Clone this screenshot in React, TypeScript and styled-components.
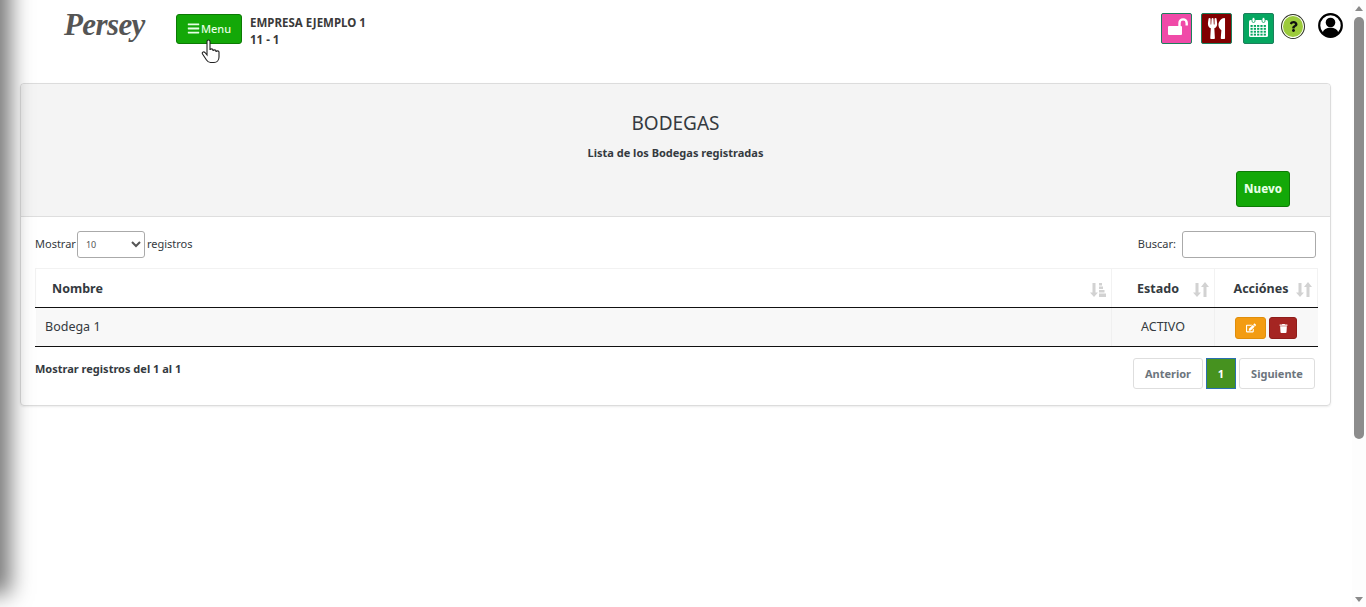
import styled, { createGlobalStyle } from 'styled-components';
import { ReactElement, ReactNode } from 'react';
import { FaBars, FaEdit, FaQuestion, FaTrash, FaUtensils } from 'react-icons/fa';

const GlobalStyle = createGlobalStyle`
  html, body {
    margin: 0;
    height: 100%;
    overflow: hidden;
    background: #fff;
  }
  body {
    font-family: "Noto Sans", "Liberation Sans", sans-serif;
    font-size: 12px;
    color: #343a40;
  }
`;

const Page = styled.div`
  position: relative;
  display: flex;
  height: 607px;
  overflow: hidden;
`;

const Main = styled.main`
  flex: 1;
  min-width: 0;
`;

const SideShadow = styled.div`
  position: absolute;
  left: -12px;
  top: -20px;
  width: 12px;
  height: 604px;
  box-shadow: 0 0 22px 10px rgba(0, 0, 0, 0.55);
`;

const Header = styled.header`
  display: flex;
  align-items: flex-start;
  height: 83px;
  padding-right: 9px;
`;

const Logo = styled.div`
  box-sizing: border-box;
  width: 176px;
  padding: 0 0 0 64px;
  font-family: "Liberation Serif", serif;
  font-style: italic;
  font-weight: 700;
  font-size: 31px;
  line-height: 50px;
  letter-spacing: -0.6px;
  color: #555;
`;

const MenuButton = styled.button`
  position: relative;
  display: flex;
  align-items: center;
  justify-content: center;
  gap: 1px;
  width: 66px;
  height: 30px;
  margin: 14px 8px 0 0;
  padding: 0 0 1px;
  border: 1px solid #0c7a05;
  border-radius: 3px;
  background: #13a808;
  color: #e6ffe6;
  font: 500 11px "Noto Sans", sans-serif;
`;

const Cursor = styled.svg`
  position: absolute;
  left: 24px;
  top: 24px;
`;

const Company = styled.div`
  flex: 1;
  margin-top: 14px;
  font-size: 11.5px;
  font-weight: 700;
  line-height: 17px;
  color: #3a3a3a;
`;

const Tools = styled.div`
  display: flex;
  align-items: flex-start;
  margin-top: 13px;
`;

const ToolTile = styled.div<{ $bg: string; $gap: number }>`
  display: flex;
  align-items: center;
  justify-content: center;
  box-sizing: border-box;
  width: 31px;
  height: 31px;
  margin-right: ${p => p.$gap}px;
  border: 1px solid #1d7f5c;
  border-radius: 2px;
  background: ${p => p.$bg};
  color: #fff;
`;

const HelpBadge = styled.div`
  display: flex;
  align-items: center;
  justify-content: center;
  box-sizing: border-box;
  width: 24px;
  height: 25px;
  margin: 1px 13px 0 0;
  border: 1px solid #333;
  border-radius: 50%;
  background: #9ccb3b;
  box-shadow: inset 0 0 0 1px #fff;
  color: #111;
`;

const Card = styled.section`
  margin: 0 21px 0 20px;
  border: 1px solid #dcdcdc;
  border-radius: 4px;
  box-shadow: 0 1px 2px rgba(0, 0, 0, 0.08);
`;

const CardHeader = styled.div`
  display: flex;
  flex-direction: column;
  height: 133px;
  box-sizing: border-box;
  padding: 25px 40px 0;
  border-bottom: 1px solid #dedede;
  border-radius: 4px 4px 0 0;
  background: #f4f4f4;
  text-align: center;
`;

const Title = styled.h1`
  margin: 0;
  font-size: 19px;
  font-weight: 400;
  line-height: 28px;
  color: #343a40;
`;

const Subtitle = styled.p`
  margin: 8px 0 0;
  font-size: 11px;
  font-weight: 700;
  line-height: 16px;
`;

const PrimaryButton = styled.button`
  align-self: flex-end;
  width: 54px;
  height: 36px;
  margin-top: 10px;
  padding: 0 0 1px;
  border: 1px solid #0c7a05;
  border-radius: 3px;
  background: #13a808;
  color: #e6ffe6;
  font: 800 11.5px "Noto Sans", sans-serif;
`;

const CardBody = styled.div`
  padding: 14px 14px 16px;
`;

const Controls = styled.div`
  display: flex;
  align-items: center;
  justify-content: space-between;
  height: 27px;
  margin-bottom: 10px;
`;

const ControlLabel = styled.label`
  display: flex;
  align-items: flex-start;
  gap: 2px;
  font-size: 11px;
  line-height: 25px;
`;

const LengthSelect = styled.select`
  width: 68px;
  height: 27px;
  margin-left: -1px;
  padding: 0 0 0 4px;
  border: 1px solid #aaa;
  border-radius: 3px;
  background: #fff;
  color: #555;
  font: 9px "Noto Sans", sans-serif;
`;

const SearchInput = styled.input`
  width: 134px;
  height: 27px;
  box-sizing: border-box;
  margin-left: 4px;
  border: 1px solid #aaa;
  border-radius: 3px;
`;

const Table = styled.table`
  width: 1283px;
  border-collapse: collapse;
  table-layout: fixed;
`;

const HeadCell = styled.th<{ $center?: boolean; $width?: number }>`
  position: relative;
  box-sizing: border-box;
  width: ${p => (p.$width ? `${p.$width}px` : 'auto')};
  height: 39px;
  padding: 0 16px 0 ${p => (p.$center ? 6 : 16)}px;
  border: 1px solid #f2f2f2;
  border-bottom: 1px solid #111;
  font-size: 12.5px;
  font-weight: 700;
  text-align: ${p => (p.$center ? 'center' : 'left')};
  color: #343a40;
`;

const SortMark = styled.svg`
  position: absolute;
  right: 5px;
  top: 13px;
  color: #d2d2d2;
`;

const Row = styled.tr`
  background: #f8f8f8;
`;

const Cell = styled.td<{ $center?: boolean }>`
  height: 36px;
  padding: 0 ${p => (p.$center ? 10 : 9)}px 2px;
  border-left: 1px solid ${p => (p.$center ? '#f0f0f0' : 'transparent')};
  border-bottom: 1px solid #111;
  font-size: 12.5px;
  line-height: 17px;
  text-align: ${p => (p.$center ? 'center' : 'left')};
`;

const Actions = styled.div`
  display: flex;
  justify-content: center;
  gap: 3px;
  margin-top: 4px;
`;

const ActionButton = styled.button<{ $bg: string; $line: string; $width: number }>`
  display: flex;
  align-items: center;
  justify-content: center;
  width: ${p => p.$width}px;
  height: 22px;
  padding: 0;
  border: 1px solid ${p => p.$line};
  border-radius: 3px;
  background: ${p => p.$bg};
  color: #fff;
`;

const Footer = styled.div`
  display: flex;
  align-items: flex-start;
  justify-content: space-between;
  margin-top: 11px;
  padding-right: 1px;
`;

const Info = styled.div`
  margin-top: 3px;
  font-size: 11px;
  font-weight: 700;
`;

const Pager = styled.div`
  display: flex;
  gap: 3px;
`;

const PageButton = styled.button<{ $active?: boolean; $width: number }>`
  width: ${p => p.$width}px;
  height: 31px;
  padding: 0;
  border: 1px solid ${p => (p.$active ? '#2a6fb0' : '#dedede')};
  border-radius: ${p => (p.$active ? 0 : 3)}px;
  background: ${p => (p.$active ? '#46921f' : '#fff')};
  color: ${p => (p.$active ? '#fff' : '#6c757d')};
  font: 700 11px "Noto Sans", sans-serif;
`;

const Scrollbar = styled.div`
  display: flex;
  flex-direction: column;
  align-items: center;
  width: 14px;
  background: #fdfdfd;
`;

const ArrowUp = styled.div`
  margin-top: 6px;
  border: 4px solid transparent;
  border-top: 0;
  border-bottom: 5px solid #8a8a8a;
`;

const Thumb = styled.div`
  width: 10px;
  height: 422px;
  margin-top: 6px;
  border-radius: 5px;
  background: #8c8c8c;
`;

const ArrowDown = styled.div`
  margin-top: auto;
  margin-bottom: 5px;
  border: 4px solid transparent;
  border-bottom: 0;
  border-top: 5px solid #8a8a8a;
`;

function SortIcon({ both }: { both?: boolean }): ReactElement {
  return (
    <SortMark width="16" height="15" viewBox="0 0 16 15" fill="currentColor">
      <path d="M2.500 1h3v9.500H8L4 15 0 10.500h2.500z" />
      {both
        ? <path d="M12 0l4 5h-2.500v10h-3V5H8z" />
        : <path d="M9 1h3v2.500H9zM9 4.500h4V7H9zM9 8h5.500v2.500H9zM9 11.500h7V15H9z" />}
    </SortMark>
  );
}

function Tool({ bg, gap, children }: { bg: string; gap: number; children: ReactNode }): ReactElement {
  return <ToolTile $bg={bg} $gap={gap}>{children}</ToolTile>;
}

function UnlockIcon(): ReactElement {
  return (
    <svg width="29" height="29" viewBox="0 0 29 29">
      <rect x="6" y="12" width="14" height="9" rx="1" fill="#fff" />
      <path d="M17.500 12V9a3.600 3.600 0 0 1 7.200 0v2.500" fill="none" stroke="#fff" strokeWidth="2.400" />
    </svg>
  );
}

function CalendarIcon(): ReactElement {
  const cells: ReactElement[] = [];
  for (let row = 0; row < 4; row++) {
    for (let col = 0; col < 5; col++) {
      cells.push(<rect key={`${row}-${col}`} x={6.5 + col * 3.3} y={11 + row * 2.9} width="2.200" height="1.900" fill="#05a660" />);
    }
  }
  return (
    <svg width="29" height="29" viewBox="0 0 29 29">
      <rect x="5" y="6" width="19" height="17" rx="1.500" fill="#fff" />
      <rect x="8" y="3.500" width="3" height="5" rx="1.500" fill="#fff" stroke="#05a660" strokeWidth="0.800" />
      <rect x="18" y="3.500" width="3" height="5" rx="1.500" fill="#fff" stroke="#05a660" strokeWidth="0.800" />
      {cells}
    </svg>
  );
}

function UserIcon(): ReactElement {
  return (
    <svg width="25" height="25" viewBox="0 0 25 25">
      <circle cx="12.500" cy="12.500" r="11.300" fill="#fff" stroke="#000" strokeWidth="2.200" />
      <circle cx="12.500" cy="9.500" r="4.800" fill="#000" />
      <path d="M4.500 20c1-3.800 4-5.300 8-5.300s7 1.500 8 5.300a11 11 0 0 1-16 0z" fill="#000" />
    </svg>
  );
}

export default function App(): ReactElement {
  return (
    <Page>
      <GlobalStyle />
      <Main>
        <Header>
          <Logo>Persey</Logo>
          <MenuButton>
            <FaBars size={13} />Menu
            <Cursor width="20" height="25" viewBox="0 0 20 25">
              <path
                d="M6 2.500c0-2 3-2 3 0V11c0-1.500 3-1.500 3 0v1c0-1.500 3-1.500 3 0v1c0-1.500 3-1.500 3 0v5c0 3-2 5.500-5 5.500H9.500c-2 0-3-1-4-2.500L1.500 15c-1-1.500 1-3 2.500-1.500L6 16z"
                fill="#fff"
                stroke="#222"
                strokeWidth="1.100"
              />
            </Cursor>
          </MenuButton>
          <Company>EMPRESA EJEMPLO 1<br />11 - 1</Company>
          <Tools>
            <Tool bg="#f04aa8" gap={9}><UnlockIcon /></Tool>
            <Tool bg="#800000" gap={11}><FaUtensils size={21} /></Tool>
            <Tool bg="#05a660" gap={7}><CalendarIcon /></Tool>
            <HelpBadge><FaQuestion size={11} /></HelpBadge>
            <UserIcon />
          </Tools>
        </Header>
        <Card>
          <CardHeader>
            <Title>BODEGAS</Title>
            <Subtitle>Lista de los Bodegas registradas</Subtitle>
            <PrimaryButton>Nuevo</PrimaryButton>
          </CardHeader>
          <CardBody>
            <Controls>
              <ControlLabel>
                Mostrar
                <LengthSelect defaultValue="10"><option>10</option></LengthSelect>
                registros
              </ControlLabel>
              <ControlLabel>
                Buscar:
                <SearchInput />
              </ControlLabel>
            </Controls>
            <Table>
              <thead>
                <tr>
                  <HeadCell>Nombre<SortIcon /></HeadCell>
                  <HeadCell $center $width={103}>Estado<SortIcon both /></HeadCell>
                  <HeadCell $center $width={103}>Acciónes<SortIcon both /></HeadCell>
                </tr>
              </thead>
              <tbody>
                <Row>
                  <Cell>Bodega 1</Cell>
                  <Cell $center>ACTIVO</Cell>
                  <Cell $center>
                    <Actions>
                      <ActionButton $bg="#f39c12" $line="#e08e0b" $width={31}><FaEdit size={10} /></ActionButton>
                      <ActionButton $bg="#a52522" $line="#8e1d1a" $width={28}><FaTrash size={9} /></ActionButton>
                    </Actions>
                  </Cell>
                </Row>
              </tbody>
            </Table>
            <Footer>
              <Info>Mostrar registros del 1 al 1</Info>
              <Pager>
                <PageButton $width={70}>Anterior</PageButton>
                <PageButton $active $width={30}>1</PageButton>
                <PageButton $width={76}>Siguiente</PageButton>
              </Pager>
            </Footer>
          </CardBody>
        </Card>
      </Main>
      <Scrollbar>
        <ArrowUp />
        <Thumb />
        <ArrowDown />
      </Scrollbar>
      <SideShadow />
    </Page>
  );
}
